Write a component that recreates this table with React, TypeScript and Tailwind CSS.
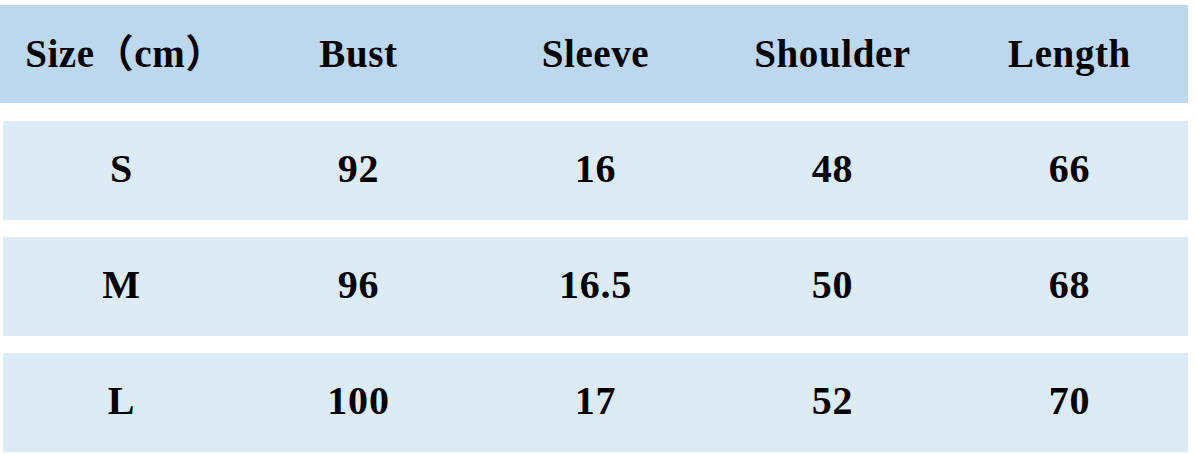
import React from "react";

const headers = ["Size（cm）", "Bust", "Sleeve", "Shoulder", "Length"];
const rows = [
  ["S", "92", "16", "48", "66"],
  ["M", "96", "16.5", "50", "68"],
  ["L", "100", "17", "52", "70"],
];

export default function App() {
  return (
    <div
      className="w-[1198px] h-[454px] bg-white pt-[5px] text-black"
      style={{ fontFamily: '"Liberation Serif", "Noto Sans CJK SC", serif' }}
    >
      <div className="w-[1188px] h-[98px] bg-[#bdd7ee] pl-[3px] grid grid-cols-5 items-center">
        {headers.map((h, i) => (
          <div
            key={h}
            className={
              i === 0
                ? "text-center font-bold text-[39px] leading-none pb-[2px] pl-[7px] tracking-[0.6px] whitespace-nowrap"
                : "text-center font-bold text-[39px] leading-none pb-[2px] tracking-[0.6px] whitespace-nowrap"
            }
          >
            {h}
          </div>
        ))}
      </div>
      <div className="mt-[18px] ml-[3px] w-[1185px] flex flex-col gap-[17px]">
        {rows.map((r) => (
          <div key={r[0]} className="h-[99px] bg-[#ddebf7] grid grid-cols-5 items-center">
            {r.map((c, i) => (
              <div key={i} className="text-center font-bold text-[40px] leading-none pb-[4px] tracking-[0.8px]">
                {c}
              </div>
            ))}
          </div>
        ))}
      </div>
    </div>
  );
}
